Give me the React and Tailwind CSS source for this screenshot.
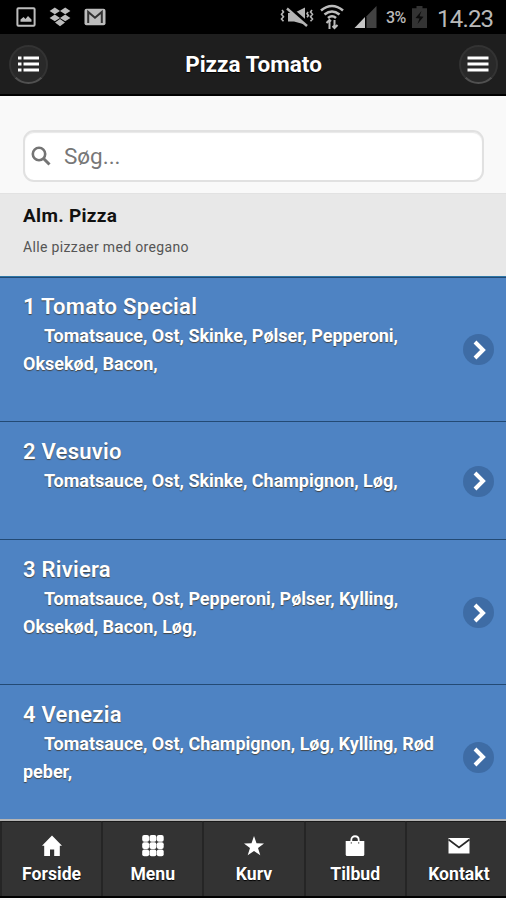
import React from 'react';

const pizzas = [
  { name: '1 Tomato Special', lines: ['Tomatsauce, Ost, Skinke, Pølser, Pepperoni,', 'Oksekød, Bacon,'], height: 'h-[144px] pt-0' },
  { name: '2 Vesuvio', lines: ['Tomatsauce, Ost, Skinke, Champignon, Løg,'], height: 'h-[118px] pt-px' },
  { name: '3 Riviera', lines: ['Tomatsauce, Ost, Pepperoni, Pølser, Kylling,', 'Oksekød, Bacon, Løg,'], height: 'h-[145px] pt-px' },
  { name: '4 Venezia', lines: ['Tomatsauce, Ost, Champignon, Løg, Kylling, Rød', 'peber,'], height: 'h-[144px] pt-px' }
];

const HomeIcon = () => (
  <svg width="22" height="22" viewBox="0 0 22 22" fill="#fff">
    <path d="M11 0.5 L21 10.8 H18.8 V21 H13.2 V14.5 H9 V21 H3.2 V10.8 H1 Z" />
  </svg>
);

const GridIcon = () => (
  <svg width="22" height="22" viewBox="0 0 22 22" fill="#fff">
    {[0, 7.3, 14.6].map((y) => [0, 7.3, 14.6].map((x) => (
      <rect key={`${x}-${y}`} x={x + 0.2} y={y} width="6.9" height="6.7" rx="2" />
    )))}
  </svg>
);

const StarIcon = () => (
  <svg width="22" height="22" viewBox="0 0 22 22" fill="#fff">
    <path d="M11 1 L13.5 8.2 L21 8.4 L15 13 L17.3 20.3 L11 16 L4.7 20.3 L7 13 L1 8.4 L8.5 8.2 Z" />
  </svg>
);

const BagIcon = () => (
  <svg width="22" height="22" viewBox="0 0 22 22" fill="#fff">
    <path d="M1.7 6 H20.3 V19.5 Q20.3 21 18.8 21 H3.2 Q1.7 21 1.7 19.5 Z" />
    <path d="M7.3 8 V5 C7.3 0 14.7 0 14.7 5 V8" fill="none" stroke="#fff" strokeWidth="1.8" />
    <path d="M7.3 7 V8.8 M14.7 7 V8.8" stroke="#777" strokeWidth="1.1" />
  </svg>
);

const MailIcon = () => (
  <svg width="22" height="22" viewBox="0 0 22 22" fill="#fff">
    <path d="M0.5 3 H21.5 V18.5 H0.5 Z" />
    <path d="M0.5 4.5 L11 12.5 L21.5 4.5" fill="none" stroke="#292929" strokeWidth="1.7" />
  </svg>
);

const tabs = [
  { label: 'Forside', Icon: HomeIcon },
  { label: 'Menu', Icon: GridIcon },
  { label: 'Kurv', Icon: StarIcon },
  { label: 'Tilbud', Icon: BagIcon },
  { label: 'Kontakt', Icon: MailIcon }
];

const StatusBar = () => (
  <div className="flex h-[34px] shrink-0 items-center justify-between bg-black pr-[13px] pl-4 text-[#b9b9b9]">
    <div className="flex items-center gap-[13px]">
      <svg width="20" height="20" viewBox="0 0 20 20" fill="none" stroke="#bdbdbd" strokeWidth="2">
        <rect x="1.4" y="1.2" width="17.2" height="17.6" rx="1" />
        <path d="M4.5 14.8 V12.5 L7.5 10 L9.5 12 L12 9 L15.5 12.5 V14.8 Z" fill="#bdbdbd" stroke="none" />
      </svg>
      <svg width="22" height="20" viewBox="0 0 22 20" fill="#bdbdbd">
        <path d="M5.8 0.5 L11 3.9 L5.8 7.3 L0.6 3.9 Z M16.2 0.5 L21.4 3.9 L16.2 7.3 L11 3.9 Z M5.8 7.6 L11 11 L5.8 14.3 L0.6 11 Z M16.2 7.6 L21.4 11 L16.2 14.3 L11 11 Z M11 12 L16 15.5 L11 19.2 L6 15.5 Z" />
      </svg>
      <svg width="22" height="18" viewBox="0 0 22 18">
        <rect x="0.5" y="0.8" width="21" height="16.5" rx="2" fill="#bdbdbd" />
        <path d="M4.2 15 V4 L11 9.8 L17.8 4 V15" fill="none" stroke="#333" strokeWidth="2" />
      </svg>
    </div>
    <div className="flex items-center">
      <svg className="mr-[6px]" width="34" height="22" viewBox="0 0 34 22" fill="none" stroke="#b5b5b5">
        <path d="M2 4 l1.5 2 l-2 2.3 l2 2.4 l-2 2.3 l2 2.2" strokeWidth="1.6" />
        <path d="M32 4 l-1.5 2 l2 2.3 l-2 2.4 l2 2.3 l-2 2.2 M28 6 l-1 1.6 l1.4 1.8 l-1.4 1.8" strokeWidth="1.6" />
        <path d="M8 7 H14 L25 1.5 V18.5 L14 15.5 H8 Z" fill="#b5b5b5" stroke="none" />
        <path d="M9 1.5 L29 19" stroke="#000" strokeWidth="4" />
        <path d="M7 2.5 L27 20" strokeWidth="2.4" />
      </svg>
      <svg className="mr-[10px]" width="24" height="26" viewBox="0 0 24 26" fill="none" stroke="#bdbdbd" strokeWidth="2.6">
        <path d="M1 6.5 Q12 -2.5 23 6.5 M4.5 10.5 Q12 4.5 19.5 10.5 M8 14 Q12 10.5 16 14" />
        <path d="M9.5 25 V16 M6.5 19 L9.5 16 L11 17.5 M14.5 16 V25 M12.5 22 L14.5 24 L17.5 21" strokeWidth="2" />
      </svg>
      <svg className="mr-2" width="23" height="22" viewBox="0 0 23 22">
        <path d="M12.5 10.2 L22.5 0 V22 H12.5 Z" fill="#424242" />
        <path d="M0.5 22 L11 11 V22 Z" fill="#c6c6c6" />
      </svg>
      <span className="mt-[2px] mr-[4px] ml-px w-[22px] text-[16px] font-medium tracking-[-0.7px]">3%</span>
      <svg className="mr-[10px]" width="15" height="22" viewBox="0 0 15 22">
        <path d="M4.5 0 H10.5 V2.2 H15 V22 H0 V2.2 H4.5 Z" fill="#333" />
        <path d="M9.5 5 L3.5 12 L7.5 12.4 L5.5 18 L11.5 10.7 L7.5 10.3 Z" fill="#0b0b0b" />
      </svg>
      <span className="mt-[3px] w-[56px] text-[24px] leading-[28px] tracking-[-0.8px] whitespace-nowrap">14.23</span>
    </div>
  </div>
);

const App = () => {
  return (
    <div className="flex h-[900px] w-[506px] flex-col overflow-hidden bg-[#f9f9f9] font-[Roboto,sans-serif]">
      <StatusBar />

      <header className="flex h-[62px] shrink-0 items-center justify-between border-b-2 border-black bg-[#1e1e1e] pr-[8px] pl-[9px]">
        <button className="flex h-[39px] w-[39px] items-center justify-center rounded-full border-2 border-[#333] border-b-[#505050] bg-[#292929]">
          <svg width="22" height="16" viewBox="0 0 22 16" fill="#fff">
            <path d="M0 0.5h3.5v3H0z M5.5 0.5H21v3H5.5z M0 6.5h3.5v3H0z M5.5 6.5H21v3H5.5z M0 12.5h3.5v3H0z M5.5 12.5H21v3H5.5z" />
          </svg>
        </button>
        <h1 className="pt-[2px] text-[22.5px] font-bold text-white [text-shadow:0_1px_1px_#000]">Pizza Tomato</h1>
        <button className="flex h-[39px] w-[39px] items-center justify-center rounded-full border-2 border-[#333] border-b-[#505050] bg-[#292929]">
          <svg width="22" height="16" viewBox="0 0 22 16" fill="#fff">
            <path d="M0.5 0.5h21v3h-21z M0.5 6.5h21v3h-21z M0.5 12.5h21v3h-21z" />
          </svg>
        </button>
      </header>

      <div className="h-[97px] shrink-0 pt-[34px] pr-[22px] pl-[23px]">
        <div className="flex h-[52px] items-center rounded-[11px] border-2 border-[#e1e1e1] bg-white pl-[6px] shadow-[inset_0_1px_1px_#e8e8e8]">
          <svg width="20" height="20" viewBox="0 0 20 20" fill="none" stroke="#747474" strokeWidth="2.6">
            <circle cx="8" cy="8" r="6.2" />
            <path d="M12.5 12.5 L18.5 18.5" strokeWidth="3" />
          </svg>
          <span className="ml-[13px] pt-px text-[22.5px] text-[#777]">Søg...</span>
        </div>
      </div>

      <div className="h-[83px] shrink-0 border-t border-[#e2e2e2] bg-[#e8e8e8] pt-[9px] pl-[23px]">
        <h2 className="text-[19px] leading-[26px] font-bold tracking-[0.3px] text-[#111]">Alm. Pizza</h2>
        <p className="mt-[8px] text-[14px] leading-[20px] tracking-[0.35px] text-[#555]">Alle pizzaer med oregano</p>
      </div>

      <ul className="min-h-0 flex-1 overflow-hidden border-t border-[#2f78a8] bg-[#4e83c3]">
        {pizzas.map((pizza) => (
          <li
            key={pizza.name}
            className={`flex items-center justify-between border-t border-t-[#234a74] pr-[12px] pl-[23px] text-white [text-shadow:0_1px_1px_#444] ${pizza.height}`}
          >
            <div className="self-start pt-[14px] font-semibold whitespace-nowrap">
              <h3 className="text-[22px] leading-[30px] tracking-[0.25px]">{pizza.name}</h3>
              {pizza.lines.map((line, i) => (
                <p key={line} className={`text-[18px] leading-[28px] font-bold tracking-[-0.02px] ${i === 0 ? 'pl-[21px]' : ''}`}>{line}</p>
              ))}
            </div>
            <span className="flex h-[31px] w-[31px] shrink-0 items-center justify-center rounded-full bg-[#3e6ca5]">
              <svg width="14" height="20" viewBox="0 0 14 20" fill="none" stroke="#fff" strokeWidth="4">
                <path d="M3 2 L11 10 L3 18" />
              </svg>
            </span>
          </li>
        ))}
      </ul>

      <nav className="mb-[2px] grid h-[79px] shrink-0 grid-cols-5 border-t-2 border-b-2 border-t-[#b4b4b4] border-b-black bg-[#333]">
        {tabs.map(({ label, Icon }) => (
          <a key={label} className="flex flex-col items-center border-t border-l-2 border-t-[#181818] border-l-[#252525] pt-[13px] last:pl-[5px]">
            <Icon />
            <span className="mt-[5px] text-[17.6px] leading-[24px] font-bold text-white [text-shadow:0_1px_1px_#000]">{label}</span>
          </a>
        ))}
      </nav>
    </div>
  );
};

export default App;
